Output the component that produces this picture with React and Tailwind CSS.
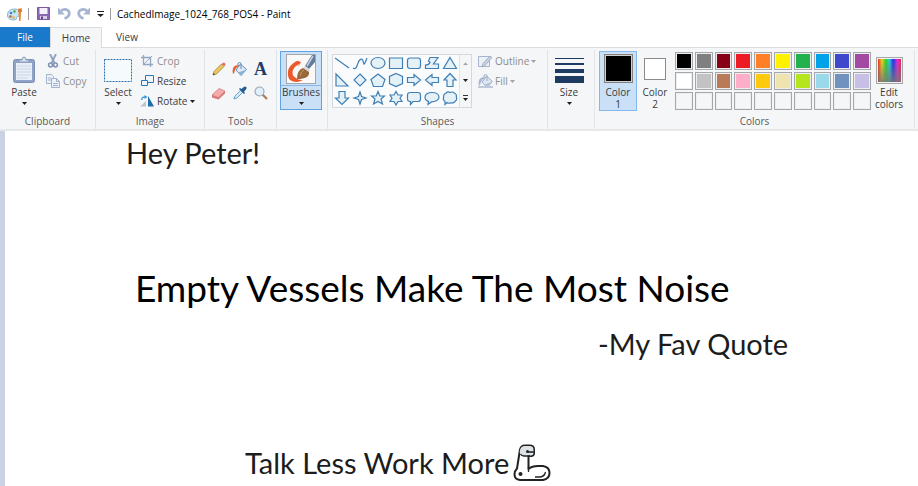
import React from "react";

const swatches = [
  ["Black", "bg-[#000000]"], ["Gray-50%", "bg-[#7f7f7f]"], ["Dark red", "bg-[#880015]"], ["Red", "bg-[#ed1c24]"], ["Orange", "bg-[#ff7f27]"],
  ["Yellow", "bg-[#fff200]"], ["Green", "bg-[#22b14c]"], ["Turquoise", "bg-[#00a2e8]"], ["Indigo", "bg-[#3f48cc]"], ["Purple", "bg-[#a349a4]"],
  ["White", "bg-white"], ["Gray-25%", "bg-[#c3c3c3]"], ["Brown", "bg-[#b97a57]"], ["Rose", "bg-[#ffaec9]"], ["Gold", "bg-[#ffc90e]"],
  ["Light yellow", "bg-[#efe4b0]"], ["Lime", "bg-[#b5e61d]"], ["Light turquoise", "bg-[#99d9ea]"], ["Blue-gray", "bg-[#7092be]"], ["Lavender", "bg-[#c8bfe7]"],
  ...Array.from({ length: 10 }, (_, i) => [`Custom ${i + 1}`, "bg-[#f5f6f7]"]),
];

const shapes = [
  ["Line", "M1 3 15 13"],
  ["Curve", "M1 13C4 15 5 11 6 8S10 2 11 6 12 11 15 3"],
  ["Oval", "M8 2.500C4 2.500 1 5 1 8s3 5.500 7 5.500 7-2.500 7-5.500-3-5.500-7-5.500Z"],
  ["Rectangle", "M1.500 3h13v10.500h-13Z"],
  ["Rounded rectangle", "M4 3h8q2.500 0 2.500 2.500V11q0 2.500-2.500 2.500H4q-2.500 0-2.500-2.500V5.500Q1.500 3 4 3Z"],
  ["Polygon", "M6 2.500h8L9.500 9h5v4.500h-13V10Q5 10 6 7.500L4.500 6Z"],
  ["Triangle", "M8 2.500 14.500 13.500h-13Z"],
  ["Right triangle", "M2 2 14 14H2Z"],
  ["Diamond", "M8 2 14 8 8 14 2 8Z"],
  ["Pentagon", "M8 2 15 7.500 12.500 14.500h-9L1 7.500Z"],
  ["Hexagon", "M8 1.500 14.500 4.500v7L8 14.500 1.500 11.500v-7Z"],
  ["Right arrow", "M1.500 5.500H8v-3L14.500 8 8 13.500v-3H1.500Z"],
  ["Left arrow", "M14.500 5.500H8v-3L1.500 8 8 13.500v-3h6.500Z"],
  ["Up arrow", "M5 14.500V8H2L8 1.500 14 8h-3v6.500Z"],
  ["Down arrow", "M5 1.500V8H1.500L8 14.500 14.500 8H11V1.500Z"],
  ["Four-point star", "M8 2 9.500 6.500 14 8 9.500 9.500 8 14 6.500 9.500 2 8 6.500 6.500Z"],
  ["Five-point star", "M8 1.500 9.800 6h4.700L11 9l1.500 5L8 11.500 3.500 14 5 9 1.500 6h4.700Z"],
  ["Six-point star", "M8 1.500 10 5h4l-2 3.200 2 3.300h-4L8 15l-2-3.500H2l2-3.300L2 5h4Z"],
  ["Rounded callout", "M4 2.500h8q2.500 0 2.500 2.500v4q0 2.500-2.500 2.500H7l-2.500 3v-3H4Q1.500 11.500 1.500 9V5Q1.500 2.500 4 2.500Z"],
  ["Oval callout", "M8 2.500c-4 0-7 2-7 4.700 0 2 1.500 3.500 3.500 4.200L4 14.500l3.500-2.600c4 0 7.500-2 7.500-4.700S12 2.500 8 2.500Z"],
  ["Cloud callout", "M4 3Q6 1.200 8 2.500 11 1.200 12.500 3.200 15 4 14.300 7 15.500 10 13 11.500 11 13.800 8.500 12.800 6.500 13.800 5 12.500L3 14.500V11.500Q.5 10 1.700 7.500.8 4.500 4 3Z"],
];

function Caret({ muted = false }) {
  return (
    <svg aria-hidden="true" width="5" height="3" viewBox="0 0 5 3" className={muted ? "shrink-0 text-[#a3a3a8]" : "shrink-0 text-[#1e1e1e]"}>
      <path d="M0 0h5L2.500 3Z" fill="currentColor" />
    </svg>
  );
}

function Group({ label, className, children }) {
  return (
    <section aria-label={label || undefined} className={`flex shrink-0 flex-col border-r border-[#e2e4e8] ${className}`}>
      <div className="flex h-16 items-start">{children}</div>
      <div className="text-center leading-4 text-[#5a5a5a]">{label}</div>
    </section>
  );
}

function BigButton({ label, icon, caret = true, className = "" }) {
  return (
    <button type="button" className={`flex flex-col items-center ${className}`}>
      <span className="flex h-8 items-center justify-center">{icon}</span>
      <span className="leading-3">{label}</span>
      {caret && <span className="pt-1"><Caret /></span>}
    </button>
  );
}

function RowButton({ label, icon, muted = false, caret = false }) {
  return (
    <button type="button" className={`flex h-5 items-center gap-0.5 pl-px leading-4 ${muted ? "text-[#8d8d8d]" : "text-[#3b3b3b]"}`}>
      <span className="flex w-4 justify-center">{icon}</span>
      {label}
      {caret && <Caret muted={muted} />}
    </button>
  );
}

const PasteIcon = () => (
  <svg width="24" height="28" viewBox="0 0 24 28">
    <rect x="1.500" y="3.500" width="21" height="23" rx="2" fill="#8fa3c6" stroke="#7c90b5" />
    <path d="M4 7h16v17H4Z" fill="#eaf0f8" />
    <path d="M5 10h14M5 13h14M5 16h14M5 19h14M5 22h11" stroke="#c7d5e8" />
    <path d="M7 6V4h3q0-3 2-3t2 3h3v2Z" fill="#dbe3ef" stroke="#8b9cba" />
  </svg>
);
const CutIcon = () => (
  <svg width="12" height="14" viewBox="0 0 12 14" fill="none">
    <path d="M3 0 7.500 9M9 0 4.500 9" stroke="#8da0bd" strokeWidth="1.800" />
    <circle cx="3.500" cy="11" r="1.900" stroke="#8093b4" strokeWidth="1.500" />
    <circle cx="8.500" cy="11" r="1.900" stroke="#8093b4" strokeWidth="1.500" />
  </svg>
);
const CopyIcon = () => (
  <svg width="14" height="14" viewBox="0 0 14 14" fill="#edf2f8" stroke="#a2b2cd">
    <path d="M.5.5h5l2 2v7h-7ZM2 4h3M2 6h3" />
    <path d="M5.500 4.500h5l3 3v6h-8Z" />
    <path d="M10.500 4.500v3h3M7 9.500h5M7 11.500h5" fill="none" />
  </svg>
);
const SelectIcon = () => (
  <svg width="28" height="23" viewBox="0 0 28 23">
    <rect x=".5" y=".5" width="27" height="22" fill="#f5fafd" stroke="#2a6fae" strokeDasharray="2 1" />
  </svg>
);
const CropIcon = () => (
  <svg width="12" height="12" viewBox="0 0 12 12" fill="none" stroke="#94a6c4">
    <path d="M2.500 0v9.500H12M0 2.500h9.500V12" strokeWidth="1.300" />
    <path d="M3 9 11 1" />
  </svg>
);
const ResizeIcon = () => (
  <svg width="13" height="12" viewBox="0 0 13 12" fill="#eef7fc" stroke="#2878b8">
    <path d="M4.500.5h8v7h-8Z" />
    <path d="M.5 5.500h6v5h-6Z" />
  </svg>
);
const RotateIcon = () => (
  <svg width="14" height="12" viewBox="0 0 14 12">
    <path d="M0 11.500 6 6v5.500Z" fill="#b6c6d8" />
    <path d="M8 1v10.500h6Z" fill="#1f6ca8" />
    <path d="M1.500 5Q2 1.500 5.500 2" fill="none" stroke="#3b9add" strokeWidth="1.400" />
    <path d="M4.500 0 7.500 2 4.500 4Z" fill="#3b9add" />
  </svg>
);
const PencilIcon = () => (
  <svg width="14" height="14" viewBox="0 0 14 14">
    <path d="M1 13 2 9.500 9.500 2 12 4.500 4.500 12Z" fill="#f0c65c" stroke="#9b7d3b" strokeWidth=".8" />
    <path d="M9.500 2 11 .7q1-.5 2 .5t.4 1.800L12 4.500Z" fill="#df776d" />
    <path d="m1 13 .6-2 1.400 1.400Z" fill="#333" />
  </svg>
);
const BucketIcon = ({ muted = false }) => (
  <svg width="15" height="14" viewBox="0 0 15 14">
    <path d="M8.500 2 14.500 7.500 9 13.500 4 8Z" fill={muted ? "#dfe6f0" : "#dcebf7"} stroke={muted ? "#9aaac6" : "#668eb3"} />
    <path d="m6.500 10.500 8-3L9 13.500Z" fill={muted ? "#b6c3d8" : "#86b1d8"} />
    <path d="M6 5V2q0-1.500 1.500-1.500T9 2v5" fill="none" stroke={muted ? "#9aaac6" : "#668eb3"} />
    <path d="M7.500 3.500Q2 2.500.8 7q-.6 3 .4 5Q2.500 11 3 8q1-3 4.500-4.500Z" fill={muted ? "#aab8d0" : "#e46135"} />
    {muted && <path d="M0 12h15v2H0Z" fill="#bec9db" />}
  </svg>
);
const EraserIcon = () => (
  <svg width="15" height="13" viewBox="0 0 15 13">
    <path d="m1 8 7-6.500L14 4 7.500 10.500Z" fill="#f5aaa9" stroke="#c67b7c" strokeWidth=".7" />
    <path d="m1 8 6.500 2.500v2L1 10.500ZM7.500 10.500 14 4v2.500l-6.500 6Z" fill="#d97778" />
  </svg>
);
const PickerIcon = () => (
  <svg width="14" height="14" viewBox="0 0 14 14">
    <path d="m1 13 1-3 5.500-5.500 2 2L4 12Z" fill="#d5eaf8" stroke="#5e9cc9" strokeWidth=".9" />
    <path d="m6 3 1-1 1.500 1Q10.500.5 12 .5q2 0 1.500 2Q13 4 11 5.500L12 7l-1 1Z" fill="#245c96" />
  </svg>
);
const MagnifierIcon = () => (
  <svg width="14" height="14" viewBox="0 0 14 14">
    <path d="m8.500 8.500 4.500 4.500" stroke="#aa7b54" strokeWidth="2.200" />
    <circle cx="5.500" cy="5.500" r="4.500" fill="#e0f0fb" stroke="#99a9b8" strokeWidth="1.200" />
  </svg>
);
const BrushIcon = () => (
  <svg width="30" height="30" viewBox="0 0 30 30">
    <rect x=".5" y=".5" width="29" height="29" fill="#faf9f8" stroke="#a2a8ae" />
    <path d="M13 6.500Q6 8 2.500 15 .5 22 4 26q6 4 13 0-5 0-7-2-5-3-3-8 2-4 6-6l-1 3 3-5-3-1Z" fill="#ec5a2b" />
    <path d="m19 12 7-11h3v7l-6 7Z" fill="#637b9a" />
    <path d="m21 12 6-10" stroke="#c1d0e0" strokeWidth="1.500" />
    <path d="m17 14 2-2 5 4-1 2Z" fill="#d9dadb" />
    <path d="M11 25q0-9 6-11l6 4q1 7-12 7Z" fill="#99693c" />
    <path d="M14 22q1-5 4-6" stroke="#c79866" fill="none" />
  </svg>
);
const OutlineIcon = () => (
  <svg width="14" height="13" viewBox="0 0 14 13">
    <path d="M.5 1.500h11v10H.5Z" fill="#edf1f7" stroke="#a6b4cc" />
    <path d="m4 12 1-3.500 7-7.500 2 1.500-7 8Z" fill="#c8d2e2" stroke="#93a4c0" strokeWidth=".8" />
  </svg>
);
const SizeIcon = () => (
  <svg width="29" height="25" viewBox="0 0 29 25" fill="#1e3b62">
    <path d="M0 0h29v1H0ZM0 5h29v2H0ZM0 11h29v4H0ZM0 18h29v7H0Z" />
  </svg>
);
const RainbowIcon = () => (
  <svg width="27" height="27" viewBox="0 0 27 27">
    <defs>
      <linearGradient id="hue"><stop stopColor="#f22a16" /><stop offset=".17" stopColor="#f5d51a" /><stop offset=".34" stopColor="#2ed72a" /><stop offset=".5" stopColor="#20ccda" /><stop offset=".66" stopColor="#1831ed" /><stop offset=".84" stopColor="#e824df" /><stop offset="1" stopColor="#f02040" /></linearGradient>
      <linearGradient id="fade" x2="0" y2="1"><stop stopColor="#777" stopOpacity="0" /><stop offset="1" stopColor="#777" stopOpacity=".85" /></linearGradient>
    </defs>
    <rect x=".5" y=".5" width="26" height="26" fill="#f2f2f2" stroke="#a5a7a9" />
    <path d="M2 2h23v23H2Z" fill="url(#hue)" />
    <path d="M2 2h23v23H2Z" fill="url(#fade)" />
  </svg>
);
const PaintLogo = () => (
  <svg width="16" height="14" viewBox="0 0 16 14" className="shrink-0">
    <path d="M8 2C3 2 .5 4.500.5 8S3 13 7 13q3 0 2.500-2.500Q10 9 12 9q2-1 0-5Q11 2 8 2Z" fill="#c8e5f4" stroke="#6ca5c7" strokeWidth=".8" />
    <circle cx="4" cy="6" r="1.300" fill="#3885ce" /><circle cx="7.500" cy="4.500" r="1.200" fill="#49a34c" /><circle cx="3.500" cy="9.500" r="1.300" fill="#d8574e" /><circle cx="6.500" cy="10.500" r="1.200" fill="#e9ae32" />
    <path d="M11.500 5h2.500l-.4 9h-1.500Z" fill="#e28a35" /><path d="m11 5 .5-4L13 2l1.500-1.500L15 5Z" fill="#d9792f" />
  </svg>
);
const SaveIcon = () => (
  <svg width="13" height="13" viewBox="0 0 13 13">
    <path d="M.5.5h12v12H.5Z" fill="#8a68b3" stroke="#7a58a4" />
    <path d="M2.500 1h8v6h-8Z" fill="#f5f1fa" /><path d="M3 9h7v3H3Z" fill="#d9cce6" /><path d="M4 9.500h2V12H4Z" fill="#62418a" />
  </svg>
);
const UndoIcon = () => (
  <svg width="13" height="13" viewBox="0 0 13 13" fill="none">
    <path d="M3 4q2-2 5-1.500 3.500.8 3.300 4.200Q11 10 6.500 11.500" stroke="#a8b5d2" strokeWidth="2.800" />
    <path d="M0 .5V7.500h7Z" fill="#a8b5d2" />
  </svg>
);
const ArmIcon = () => (
  <svg aria-label="Flexed arm" role="img" width="38" height="38" viewBox="0 0 38 38" className="absolute left-[508px] top-[313px]">
    <path d="M7 5.500Q8 1.500 12 1.500h4.500Q21 1.500 21 5.500V9q0 3-3 3h-2.500v13Q19 22 25 22h5q6.500 1 6.500 7T30 36H7q-5.500-.5-5.500-5.500 0-3.500 2.500-6Z" fill="#fff" stroke="#222" strokeWidth="2" strokeLinejoin="round" />
    <path d="M7 6Q8 2 12 2h4.500Q20.500 2 20.500 6v2.500q0 3-3 3H9Q6 10 7 6Z" fill="#dde3e7" />
    <path d="M21 8h-6M7.500 10q1 2 3.500 2h6M15.500 23v5M22 33h4q5.500 0 6.500-5" fill="none" stroke="#222" strokeWidth="1.300" />
    <circle cx="14.500" cy="7.500" r="1.500" fill="#222" />
    <circle cx="7.500" cy="30" r="2" fill="#222" />
  </svg>
);

export default function App() {
  return (
    <div className="flex h-screen flex-col overflow-hidden bg-white font-['Open_Sans','Noto_Sans',sans-serif] text-[10px] text-[#3b3b3b]">
      <header className="flex h-[27px] shrink-0 items-center pl-[7px]">
        <PaintLogo />
        <span className="ml-[5px] h-3 w-px bg-[#9b9b9b]" />
        <button type="button" aria-label="Save" className="ml-2"><SaveIcon /></button>
        <button type="button" aria-label="Undo" className="ml-2"><UndoIcon /></button>
        <button type="button" aria-label="Redo" className="ml-1.5 -scale-x-100"><UndoIcon /></button>
        <button type="button" aria-label="Customize toolbar" className="ml-[7px]">
          <svg width="7" height="6" viewBox="0 0 7 6"><path d="M0 0h7v1H0ZM0 3h7L3.500 6Z" fill="#222" /></svg>
        </button>
        <span className="ml-1.5 h-3 w-px bg-[#9b9b9b]" />
        <h1 className="ml-1.5 leading-4 text-black">CachedImage_1024_768_POS4 - Paint</h1>
      </header>

      <nav className="flex h-[21px] shrink-0 border-b border-[#dadbdc]">
        <button type="button" className="h-5 w-[50px] bg-[#1979ca] text-white">File</button>
        <button type="button" aria-current="page" className="-mb-px w-[52px] border-x border-t border-[#dadbdc] bg-[#f5f6f7]">Home</button>
        <button type="button" className="w-[50px]">View</button>
      </nav>

      <div className="flex h-[83px] shrink-0 border-b-2 border-[#e6e7e9] bg-[#f5f6f7] pt-0.5">
        <Group label="Clipboard" className="w-24">
          <BigButton label="Paste" icon={<PasteIcon />} className="ml-1 mt-1 w-10" />
          <div className="mt-px">
            <RowButton label="Cut" icon={<CutIcon />} muted />
            <RowButton label="Copy" icon={<CopyIcon />} muted />
          </div>
        </Group>
        <Group label="Image" className="w-[109px]">
          <BigButton label="Select" icon={<SelectIcon />} className="ml-0.5 mt-1 w-10" />
          <div className="mt-px">
            <RowButton label="Crop" icon={<CropIcon />} muted />
            <RowButton label="Resize" icon={<ResizeIcon />} />
            <RowButton label="Rotate" icon={<RotateIcon />} caret />
          </div>
        </Group>
        <Group label="Tools" className="w-[72px]">
          <div className="mt-[7px] grid grid-cols-3 pl-[3px]">
            <button type="button" aria-label="Pencil" className="flex h-6 w-[21px] items-center justify-center"><PencilIcon /></button>
            <button type="button" aria-label="Fill with color" className="flex h-6 w-[21px] items-center justify-center"><BucketIcon /></button>
            <button type="button" aria-label="Text" className="flex h-6 w-[21px] items-center justify-center font-['Liberation_Serif',serif] text-lg font-bold text-[#1f3c68]">A</button>
            <button type="button" aria-label="Eraser" className="flex h-6 w-[21px] items-center justify-center"><EraserIcon /></button>
            <button type="button" aria-label="Color picker" className="flex h-6 w-[21px] items-center justify-center"><PickerIcon /></button>
            <button type="button" aria-label="Magnifier" className="flex h-6 w-[21px] items-center justify-center"><MagnifierIcon /></button>
          </div>
        </Group>
        <Group label="" className="w-[51px]">
          <button type="button" className="ml-[3px] mt-px flex h-[59px] w-[42px] flex-col items-center border border-[#62a2e4] bg-[#c9e0f7]">
            <span className="flex h-[34px] w-full items-center justify-center border-b border-[#86b7e8]"><BrushIcon /></span>
            <span className="leading-3">Brushes</span>
            <span className="pt-1"><Caret /></span>
          </button>
        </Group>
        <Group label="Shapes" className="w-[220px]">
          <div className="ml-1 mt-1 flex h-[54px] border border-[#d5d8dd] bg-[#fafbfd]">
            <div className="grid grid-cols-7">
              {shapes.map(([name, d], i) => (
                <button key={name} type="button" aria-label={name} className="-mt-px flex h-[18px] w-[18px] items-center justify-center">
                  <svg width="16" height="16" viewBox="0 0 16 16" fill={i < 2 ? "none" : "#e4f2f8"} stroke="#3f7fb4" strokeWidth="1.200"><path d={d} /></svg>
                </button>
              ))}
            </div>
            <div className="flex w-3 flex-col border-l border-[#dfe2e6] bg-[#f5f6f7]">
              <button type="button" aria-label="Scroll up" className="flex flex-1 rotate-180 items-center justify-center"><Caret muted /></button>
              <button type="button" aria-label="Scroll down" className="flex flex-1 items-center justify-center"><Caret /></button>
              <button type="button" aria-label="All shapes" className="flex flex-1 flex-col items-center justify-center gap-0.5"><span className="h-px w-[5px] bg-[#333]" /><Caret /></button>
            </div>
          </div>
          <div className="ml-1 mt-px">
            <RowButton label="Outline" icon={<OutlineIcon />} muted caret />
            <RowButton label="Fill" icon={<BucketIcon muted />} muted caret />
          </div>
        </Group>
        <Group label="" className="w-[47px]">
          <BigButton label="Size" icon={<SizeIcon />} className="ml-px mt-1 w-10" />
        </Group>
        <Group label="Colors" className="w-[320px]">
          <button type="button" aria-pressed="true" className="ml-1 mt-px flex h-[60px] w-[38px] flex-col items-center border border-[#84b7eb] bg-[#c9e0f7]">
            <span className="mt-0.5 h-[29px] w-[29px] border border-[#808080] bg-black shadow-[inset_0_0_0_1px_#cfcfcf]" />
            <span className="pt-[3px] leading-3">Color<br />1</span>
          </button>
          <button type="button" className="mt-0.5 flex h-[58px] w-9 flex-col items-center">
            <span className="mt-1.5 h-[22px] w-[22px] border border-[#8b8b8b] bg-white" />
            <span className="pt-1.5 leading-3">Color<br />2</span>
          </button>
          <div className="ml-0.5 mt-0.5 grid w-[196px] grid-cols-10 gap-0.5">
            {swatches.map(([name, bg]) => (
              <button key={name} type="button" aria-label={name} className={`h-[18px] border border-[#a5a7aa] shadow-[inset_0_0_0_1px_#eceef0] ${bg}`} />
            ))}
          </div>
          <button type="button" className="mt-1 flex w-9 flex-col items-center">
            <span className="flex h-8 items-center"><RainbowIcon /></span>
            <span className="leading-3">Edit<br />colors</span>
          </button>
        </Group>
      </div>

      <main className="flex min-h-0 flex-1">
        <div className="w-[5px] shrink-0 bg-[#c9d3e4]" />
        <div className="relative flex-1 overflow-hidden bg-white font-[Lato,'Open_Sans',sans-serif] whitespace-nowrap text-[#1c1c1c]">
          <p className="absolute left-[121px] top-[6px] text-[29px] leading-8">Hey Peter!</p>
          <p className="absolute left-[130px] top-[137px] text-[37px] leading-10 text-black">Empty Vessels Make The Most Noise</p>
          <p className="absolute left-[593px] top-[197px] text-[29px] leading-8">-My Fav Quote</p>
          <p className="absolute left-[240px] top-[316px] text-[29px] leading-8">Talk Less Work More</p>
          <ArmIcon />
        </div>
      </main>
    </div>
  );
}
